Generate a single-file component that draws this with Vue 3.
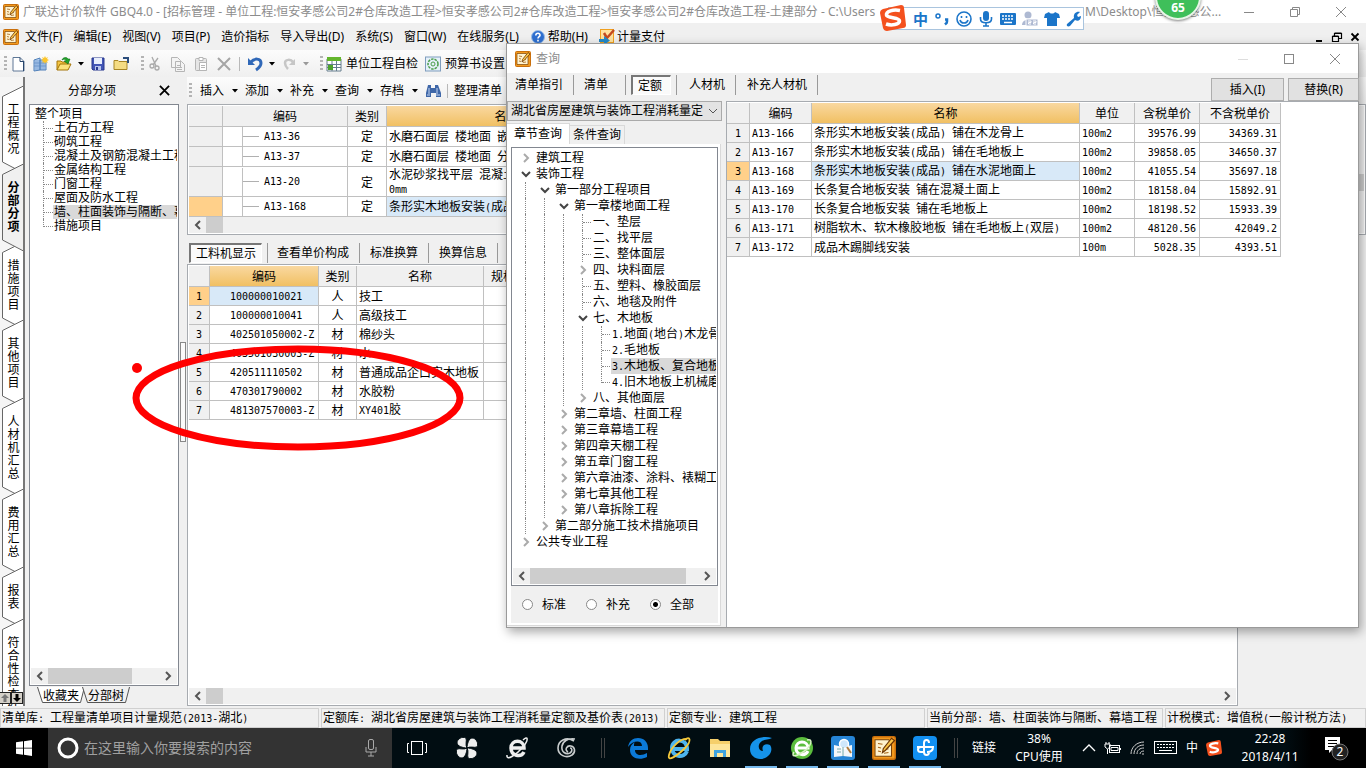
<script setup>
import { h, ref } from 'vue'

/* Splits a label so that its Latin runs use the half-width face. */
const Mix = (props) =>
  props.t.split(/([\x20-\x7e]+)/).filter(Boolean).map((s) =>
    /^[\x20-\x7e]/.test(s) ? h('span', { class: 'half' }, s) : s
  )
Mix.props = ['t']

const menusA = ['文件(F)', '编辑(E)', '视图(V)', '项目(P)', '造价指标', '导入导出(D)', '系统(S)', '窗口(W)', '在线服务(L)']
const sideTabs = ['工程概况', '分部分项', '措施项目', '其他项目', '人材机汇总', '费用汇总', '报表', '符合性检查结果']
const parts = ['土石方工程', '砌筑工程', '混凝土及钢筋混凝土工程', '金属结构工程', '门窗工程', '屋面及防水工程', '墙、柱面装饰与隔断、幕墙工程', '措施项目']
const actions = ['插入', '添加', '补充', '查询', '存档']
const quota = [
  { code: 'A13-36', name: '水磨石面层 楼地面 嵌条' },
  { code: 'A13-37', name: '水磨石面层 楼地面 分格' },
  { code: 'A13-20', name: '水泥砂浆找平层 混凝土', more: '0mm' },
  { code: 'A13-168', name: '条形实木地板安装(成品) 铺在' }
]
const detailTabs = ['查看单价构成', '标准换算', '换算信息']
const resources = [
  ['100000010021', '人', '技工'],
  ['100000010041', '人', '高级技工'],
  ['402501050002-Z', '材', '棉纱头'],
  ['403501030003-Z', '材', '水'],
  ['420511110502', '材', '普通成品企口实木地板'],
  ['470301790002', '材', '水胶粉'],
  ['481307570003-Z', '材', 'XY401胶']
]
const results = [
  ['A13-166', '条形实木地板安装(成品) 铺在木龙骨上', '100m2', '39576.99', '34369.31'],
  ['A13-167', '条形实木地板安装(成品) 铺在毛地板上', '100m2', '39858.05', '34650.37'],
  ['A13-168', '条形实木地板安装(成品) 铺在水泥地面上', '100m2', '41055.54', '35697.18'],
  ['A13-169', '长条复合地板安装 铺在混凝土面上', '100m2', '18158.04', '15892.91'],
  ['A13-170', '长条复合地板安装 铺在毛地板上', '100m2', '18198.52', '15933.39'],
  ['A13-171', '树脂软木、软木橡胶地板 铺在毛地板上(双层)', '100m2', '48120.56', '42049.2'],
  ['A13-172', '成品木踢脚线安装', '100m', '5028.35', '4393.51']
]
/* level, state (c closed, o open, l leaf, e last leaf), label */
const chapters = [
  [0, 'c', '建筑工程'],
  [0, 'o', '装饰工程'],
  [1, 'o', '第一部分工程项目'],
  [2, 'o', '第一章楼地面工程'],
  [3, 'l', '一、垫层'],
  [3, 'l', '二、找平层'],
  [3, 'l', '三、整体面层'],
  [3, 'c', '四、块料面层'],
  [3, 'l', '五、塑料、橡胶面层'],
  [3, 'l', '六、地毯及附件'],
  [3, 'o', '七、木地板'],
  [4, 'l', '1.地面(地台)木龙骨'],
  [4, 'l', '2.毛地板'],
  [4, 'l', '3.木地板、复合地板'],
  [4, 'e', '4.旧木地板上机械磨光'],
  [3, 'c', '八、其他面层'],
  [2, 'c', '第二章墙、柱面工程'],
  [2, 'c', '第三章幕墙工程'],
  [2, 'c', '第四章天棚工程'],
  [2, 'c', '第五章门窗工程'],
  [2, 'c', '第六章油漆、涂料、裱糊工程'],
  [2, 'c', '第七章其他工程'],
  [2, 'c', '第八章拆除工程'],
  [1, 'c', '第二部分施工技术措施项目'],
  [0, 'c', '公共专业工程']
]
const scope = ref('全部')
</script>

<template>
  <div class="screen">
    <svg class="defs" aria-hidden="true">
      <symbol id="book" viewBox="0 0 16 16">
        <rect x=".5" y=".5" width="15" height="15" rx="1" fill="#f39a1d" stroke="#c96f0c" />
        <path d="M2 2.500h9l2 2v9H2z" fill="#fff3cf" stroke="#7a4308" stroke-width=".7" />
        <path d="M4 5l3 .5M4 7.500l2 .5M4 10l2 .5M9 9l2-.5M8 11.500l3-.5" stroke="#a5641a" stroke-width=".8" />
        <path d="M13 1.500L7.500 8.500l-.5 2.500 2-1.500L15 3z" fill="#fbc64a" stroke="#6b3505" stroke-width=".8" />
      </symbol>
      <symbol id="down" viewBox="0 0 6 4"><path d="M0 0h6L3 3.500z" fill="currentColor" /></symbol>
      <symbol id="prev" viewBox="0 0 8 10"><path d="M6 1L2 5l4 4" fill="none" stroke="currentColor" stroke-width="2" /></symbol>
      <symbol id="next" viewBox="0 0 8 10"><path d="M2 1l4 4-4 4" fill="none" stroke="currentColor" stroke-width="2" /></symbol>
      <symbol id="min" viewBox="0 0 10 10"><path d="M0 5.500h10" stroke="currentColor" /></symbol>
      <symbol id="max" viewBox="0 0 10 10"><rect x=".5" y=".5" width="9" height="9" fill="none" stroke="currentColor" /></symbol>
      <symbol id="restore" viewBox="0 0 10 10"><path d="M.5 2.500h7v7h-7zM2.500 2.500v-2h7v7h-2" fill="none" stroke="currentColor" /></symbol>
      <symbol id="close" viewBox="0 0 10 10"><path d="M0 0l10 10M10 0L0 10" stroke="currentColor" /></symbol>
      <symbol id="sogou" viewBox="0 0 26 28">
        <path d="M3 5l18-4q3 0 3 3l2 17q0 3-3 3L7 27q-3 0-4-3L0 9q0-3 3-4z" fill="#f4511e" />
        <path d="M20 6.500C13 5 6 7.500 6.500 11c.5 3.500 13 2 13 6 0 3.500-8 5-13.500 3" fill="none" stroke="#fff" stroke-width="3.600" />
      </symbol>
    </svg>

    <header class="titlebar">
      <svg class="i16"><use href="#book" /></svg>
      <span class="title">广联达计价软件 GBQ4.0 - [招标管理 - 单位工程:恒安孝感公司2#仓库改造工程&gt;恒安孝感公司2#仓库改造工程&gt;恒安孝感公司2#仓库改造工程-土建部分 - C:\Users</span>
      <span class="path">M\Desktop\恒安孝感公...</span>
      <div class="winbtns">
        <button aria-label="最小化"><svg class="i10"><use href="#min" /></svg></button>
        <button aria-label="还原"><svg class="i10"><use href="#restore" /></svg></button>
        <button aria-label="关闭"><svg class="i10"><use href="#close" /></svg></button>
      </div>
    </header>

    <nav class="menubar">
      <svg class="i16"><use href="#book" /></svg>
      <button v-for="m in menusA" :key="m">{{ m }}</button>
      <button class="withicon">
        <svg class="i16" viewBox="0 0 16 16"><circle cx="8" cy="8" r="6.500" fill="#2e6fd0" stroke="#9dbfe8" /><path d="M5.800 6.500C5.800 3.500 10.300 3.700 10 6.300 9.800 7.700 8 7.700 8 9.500M8 10.800v1.600" fill="none" stroke="#fff" stroke-width="1.600" /></svg>帮助(H)
      </button>
      <button class="withicon">
        <svg class="i16" viewBox="0 0 16 16"><rect x="1.500" y=".5" width="13" height="13" fill="#ffe2a0" stroke="#f0a020" /><path d="M5 4l3 5 7-8" fill="none" stroke="#c44a20" stroke-width="2.500" /><path d="M0 10h5V7l6 4.500-6 4.500v-3H0z" fill="#258ac8" /></svg>计量支付
      </button>
      <div class="mdi">
        <button aria-label="最小化文档"><svg class="i10" viewBox="0 0 10 10"><path d="M2 9h6" stroke="#000" stroke-width="2" /></svg></button>
        <button aria-label="还原文档"><svg class="i10" viewBox="0 0 10 10"><path d="M.5 4.500h6v5h-6zM2.500 4V1.500h7v5H7M2.500 1h7M.5 4h6" fill="none" stroke="#000" stroke-width="1.200" /></svg></button>
        <button aria-label="关闭文档"><svg class="i10" viewBox="0 0 10 10"><path d="M1.500 1.500l7 7M8.500 1.500l-7 7" stroke="#000" stroke-width="1.800" /></svg></button>
      </div>
    </nav>

    <div class="toolbar main">
      <i class="grip"></i>
      <button aria-label="新建"><svg class="i16" viewBox="0 0 16 16"><path d="M3 1.500h7l4 4v9.500H3z" fill="#fff" stroke="#5e7796" /><path d="M10 1.500v4h4M13.500 5v10" fill="none" stroke="#28466c" /></svg></button>
      <button aria-label="新建项目"><svg class="i16" viewBox="0 0 16 16"><path d="M1 4l6-2v12l-6 1zM7 4h6v10H7z" fill="#b9d3f2" stroke="#4f7fb8" /><path d="M3 4v10M5 4v10M9 5v9M11 5v9M1 7h12M1 10h12" stroke="#5c8bc4" stroke-width=".7" /><path d="M12 0l1 2 2-1-1 2 2 1-2 1 1 2-2-1-1 2-1-2-2 1 1-2-2-1 2-1-1-2 2 1z" fill="#fbc52c" /></svg></button>
      <button aria-label="打开"><svg class="i16" viewBox="0 0 16 16"><path d="M1 14V5h4l1 1h6v3" fill="#f4c543" stroke="#a3740a" /><path d="M1 14l3-6h11l-3 6z" fill="#fbe27c" stroke="#a3740a" /><path d="M6 4c1-3 5-3 6-1h2l-2 5-4-3h2C10 3 7 3 6 4z" fill="#22a52b" stroke="#0d6e15" stroke-width=".6" /></svg></button>
      <svg class="arrow"><use href="#down" /></svg>
      <button aria-label="保存"><svg class="i16" viewBox="0 0 16 16"><path d="M2 2h12v12H3l-1-1z" fill="#4255b5" stroke="#26368d" /><path d="M4 2h8v6H4z" fill="#e8eefc" /><path d="M5 10h6v4H5z" fill="#b7c3ec" /><path d="M6 11h2v3H6z" fill="#26368d" /></svg></button>
      <button aria-label="另存"><svg class="i16" viewBox="0 0 16 16"><path d="M1 13.500v-9h4l1 1h8v8z" fill="#f5dc83" stroke="#a88525" /><path d="M10 2h5v5" fill="none" stroke="#2b4d7c" stroke-width="2" /></svg></button>
      <i class="grip"></i>
      <button aria-label="剪切"><svg class="i16" viewBox="0 0 16 16" fill="none" stroke="#aaa" stroke-width="1.300"><path d="M5 1l4 9M11 2L6 9" /><circle cx="5" cy="10" r="2" /><circle cx="10" cy="12" r="2" /></svg></button>
      <button aria-label="复制"><svg class="i16" viewBox="0 0 16 16" fill="#f4f4f4" stroke="#b5b5b5"><path d="M1.500 1.500h6l3 3v7h-9zM5.500 5.500h6l3 3v7h-9z" /><path d="M7 9.500h4M7 11.500h5M7 13.500h5" /></svg></button>
      <button aria-label="粘贴"><svg class="i16" viewBox="0 0 16 16" fill="#e6e6e6" stroke="#b5b5b5"><rect x="2.500" y="2.500" width="11" height="12" rx="1" /><path d="M6 1.500h4v3H6zM6.500 6.500h7v8h-7z" fill="#fff" /><path d="M8 9.500h4M8 11.500h4" /></svg></button>
      <button aria-label="删除"><svg class="i16" viewBox="0 0 16 16"><path d="M2 2l12 12M14 2L2 14" stroke="#a5a5a5" stroke-width="2" /></svg></button>
      <i class="bar"></i>
      <button aria-label="撤销"><svg class="i16" viewBox="0 0 16 16"><path d="M4 6c3-4 10-4 10 1 0 3-2 5-5 7" fill="none" stroke="#3068b8" stroke-width="3" /><path d="M1 2v7h7z" fill="#3068b8" /></svg></button>
      <svg class="arrow"><use href="#down" /></svg>
      <button aria-label="重做"><svg class="i16" viewBox="0 0 16 16"><path d="M12 6C10 3 4 3 4 7c0 3 1 4 3 6" fill="none" stroke="#c6c6c6" stroke-width="2.500" /><path d="M14 3v6H8z" fill="#c6c6c6" /></svg></button>
      <svg class="arrow dim"><use href="#down" /></svg>
      <i class="grip"></i>
      <button class="withicon"><svg class="i16" viewBox="0 0 16 16"><path d="M1 3h14v12H1z" fill="#fff" stroke="#647c8c" /><path d="M1 1h14v4H1z" fill="#63b52c" /><path d="M1 8.500h14M1 11.500h14M6 5v10M10.500 5v10" stroke="#647c8c" /><path d="M2 9h5v5H2z" fill="#4da32c" /></svg>单位工程自检</button>
      <button class="withicon"><svg class="i16" viewBox="0 0 16 16"><rect x=".5" y="1" width="15" height="14" fill="#e6f0fa" stroke="#7f9dbd" /><circle cx="8" cy="8" r="5" fill="none" stroke="#4a9e4a" stroke-width="1.500" stroke-dasharray="2.500 1" /><circle cx="8" cy="8" r="2" fill="none" stroke="#4a9e4a" /></svg>预算书设置</button>
    </div>

    <main class="work">
      <aside class="rail">
        <button v-for="(s, k) in sideTabs" :key="s" class="vtab" :class="{ on: k === 1 }">
          <svg class="vshape" :height="s.length * 13 + 26"><path :d="`M21.500 -10L.5 .5V${s.length * 13 + 14}L21.500 ${s.length * 13 + 25}`" /></svg>
          <span>{{ s }}</span>
        </button>
        <div class="railnav">
          <button aria-label="上移"><svg class="i10" viewBox="0 0 10 10"><path d="M5 1l4 4H6.500v4h-3V5H1z" fill="#777" /></svg></button>
          <button aria-label="下移"><svg class="i10" viewBox="0 0 10 10"><path d="M5 9l4-4H6.500V1h-3v4H1z" fill="#000" /></svg></button>
        </div>
      </aside>

      <section class="panel">
        <div class="panelhead"><span>分部分项</span><button aria-label="关闭面板"><svg viewBox="0 0 12 12"><path d="M1 1l10 10M11 1L1 11" stroke="#000" stroke-width="2" /></svg></button></div>
        <div class="treebox">
          <ul class="parttree">
            <li class="root">整个项目</li>
            <li v-for="(p, k) in parts" :key="p" :class="{ on: k === 6, last: k === 7 }"><i></i><span>{{ p }}</span></li>
          </ul>
          <div class="hscroll"><svg><use href="#prev" /></svg><b class="t1"></b><svg class="end"><use href="#next" /></svg></div>
        </div>
        <div class="foottabs">
          <button><svg width="48" height="16" viewBox="0 0 48 16"><path d="M.5 0l5 15.500h38L47.500 0" fill="#fff" stroke="#555" /></svg><span>收藏夹</span></button>
          <button><svg width="48" height="16" viewBox="0 0 48 16"><path d="M.5 0l5 15.500h38L47.500 0" fill="#f0f0f0" stroke="#555" /></svg><span>分部树</span></button>
        </div>
      </section>

      <div class="splitter"><i></i></div>

      <section class="center">
        <div class="toolbar sub">
          <i class="grip"></i>
          <template v-for="a in actions" :key="a"><button>{{ a }}</button><svg class="arrow"><use href="#down" /></svg></template>
          <button aria-label="查找"><svg class="i16" viewBox="0 0 16 16"><path d="M3 2h3v3h4V2h3l3 8v4h-5v-4H6v4H1v-4z" fill="#3f67a8" /><path d="M4 5v6M12 5v6M2 12h3M11 12h4" stroke="#c7d8f2" /></svg></button>
          <i class="bar"></i>
          <button>整理清单</button>
        </div>

        <div class="gridbox upper">
          <div class="gridclip">
            <table class="grid quota">
              <colgroup><col class="w34" /><col class="w125" /><col class="w39" /><col class="w240" /></colgroup>
              <thead><tr><th></th><th>编码</th><th>类别</th><th class="hot">名称</th></tr></thead>
              <tbody>
                <tr v-for="(q, k) in quota" :key="q.code" :class="{ tall: q.more }">
                  <th :class="{ cur: k === 3 }"></th>
                  <td class="branch"><div><i></i><u></u><Mix :t="q.code" /></div></td>
                  <td class="mid">定</td>
                  <td :class="{ sel: k === 3 }"><Mix :t="q.name" /><template v-if="q.more"><br /><Mix :t="q.more" /></template></td>
                </tr>
              </tbody>
            </table>
          </div>
          <div class="vscroll"><b></b></div>
          <div class="hscroll"><svg><use href="#prev" /></svg><b class="t2"></b></div>
        </div>

        <div class="tabs">
          <button class="down">工料机显示</button>
          <button v-for="d in detailTabs" :key="d">{{ d }}</button>
        </div>

        <div class="gridbox lower">
          <div class="gridclip">
            <table class="grid">
              <colgroup><col class="w21" /><col class="w109" /><col class="w38" /><col class="w127" /><col class="w39" /></colgroup>
              <thead><tr><th></th><th class="hot">编码</th><th>类别</th><th>名称</th><th>规格</th></tr></thead>
              <tbody>
                <tr v-for="(r, k) in resources" :key="r[0]">
                  <th :class="{ cur: k === 0 }"><Mix :t="String(k + 1)" /></th>
                  <td class="code" :class="{ sel: k === 0 }"><Mix :t="r[0]" /></td>
                  <td class="mid">{{ r[1] }}</td>
                  <td><Mix :t="r[2]" /></td>
                  <td></td>
                </tr>
              </tbody>
            </table>
          </div>
          <div class="hscroll"><svg><use href="#prev" /></svg><b class="t2"></b><svg class="end"><use href="#next" /></svg></div>
        </div>
      </section>
    </main>

    <footer class="status">
      <span class="s1"><Mix t="清单库: 工程量清单项目计量规范(2013-湖北)" /></span>
      <span class="s2"><Mix t="定额库: 湖北省房屋建筑与装饰工程消耗量定额及基价表(2013)" /></span>
      <span class="s3"><Mix t="定额专业: 建筑工程" /></span>
      <span class="s4"><Mix t="当前分部: 墙、柱面装饰与隔断、幕墙工程" /></span>
      <span class="s5"><Mix t="计税模式: 增值税(一般计税方法)" /></span>
    </footer>

    <div class="taskbar">
      <button class="start" aria-label="开始"><svg class="i16" viewBox="0 0 16 16"><path d="M0 2.300l7-1v6.400H0zM8 1.200L16 0v7.700H8zM0 8.500h7v6.300l-7-1zM8 8.500h8V16l-8-1.200z" fill="#fff" /></svg></button>
      <label class="search">
        <svg width="22" height="22" viewBox="0 0 22 22"><circle cx="11" cy="11" r="9" fill="none" stroke="#fff" stroke-width="3" /></svg>
        <input type="text" placeholder="在这里输入你要搜索的内容" aria-label="搜索" />
        <svg width="12" height="18" viewBox="0 0 12 18" fill="none" stroke="#aaa"><rect x="3.500" y=".5" width="5" height="10" rx="1.500" /><path d="M1 8v5h10V8M6 13v4M3 17h6" /></svg>
      </label>
      <div class="apps quick">
        <button aria-label="任务视图"><svg width="22" height="16" viewBox="0 0 22 16" fill="none" stroke="#fff"><rect x="5.500" y="1.500" width="11" height="13" /><path d="M3 3.500H1.500v9H3M19 3.500h1.500v9H19" /></svg></button>
        <button aria-label="花瓣"><svg class="i22" viewBox="0 0 22 22" fill="#eee"><path d="M11 11C9 8 11 4 10 1 6-1 1 2 1 6c0 3 6 5 10 5zM11 11c3-2 7 0 10-1 2-4-1-9-5-9-3 0-5 6-5 10zM11 11c2 3 0 7 1 10 4 2 9-1 9-5 0-3-6-5-10-5zM11 11c-3 2-7 0-10 1-2 4 1 9 5 9 3 0 5-6 5-10z" stroke="#010d12" /></svg></button>
        <button aria-label="浏览器"><svg class="i22" viewBox="0 0 22 22" fill="none" stroke="#eee"><path d="M18 15c-3 6-13 4-13-4 0-9 13-9 13 0H6" stroke-width="3.500" /><path d="M17 3c5-5 6 0 0 7C11 17 0 25 1 18" stroke-width="1.500" /></svg></button>
        <button aria-label="游戏"><svg class="i22" viewBox="0 0 22 22" fill="none" stroke="#c8cccd" stroke-width="1.600"><path d="M18 4C10-1 2 4 2 11s8 11 14 7c4-3 3-8-1-9-4-1-7 4-3 6M19 2C12 1 7 4 6 9c-1 6 4 9 8 7 3-2 2-5 0-5" /></svg></button>
      </div>
      <i class="divide"></i>
      <div class="apps">
        <button aria-label="Edge"><svg class="i24" viewBox="0 0 24 24"><path d="M2 11C3 5 7 2 12 2c6 0 10 4 10 10v2H9c0 6 7 6 12 3v4c-8 4-17 1-17-7 0-4 2-6 5-8-1 1-1 2-1 4h8c0-6-9-6-14 1z" fill="#0b79d7" /></svg></button>
        <button aria-label="Internet Explorer"><svg class="i24" viewBox="0 0 24 24" fill="none"><path d="M20 15c-3 8-15 6-15-3 0-10 15-10 15 1H6" stroke="#4db4ee" stroke-width="4" /><path d="M18 4c5-5 7 1 0 8S0 27 2 19 14 2 20 3" stroke="#f5c93b" stroke-width="1.800" /></svg></button>
        <button aria-label="文件夹"><svg class="i24" viewBox="0 0 24 24"><path d="M2 3h8l2 2h10v16H2z" fill="#f5cf6b" /><path d="M2 8h20v13H2z" fill="#fde59a" /><path d="M6 21v-7h12v7h-3v-4H9v4z" fill="#3ea2df" /></svg></button>
        <button class="run" aria-label="广联达"><svg class="i24" viewBox="0 0 24 24"><path d="M23 2C14-1 1 3 1 13c0 8 8 12 15 9 6-3 8-9 5-13-5-2-9 1-7 6-5 0-6-7-1-10 3-2 7-1 10-3z" fill="#1593ea" /></svg></button>
        <button class="run" aria-label="安全浏览器"><svg class="i24" viewBox="0 0 24 24"><circle cx="12" cy="12" r="11" fill="#5bbd3d" /><path d="M18 15c-3 6-12 4-12-3 0-8 12-8 12 0H7" fill="none" stroke="#fff" stroke-width="3" /><path d="M17 4c7-2 4 7-4 12S1 21 4 16" fill="none" stroke="#d9f3c5" stroke-width="1.500" /></svg></button>
        <button class="run" aria-label="阅读"><svg class="i24" viewBox="0 0 24 24"><rect width="24" height="24" rx="3" fill="#2685d6" /><path d="M3 9l9 2 9-2v12l-9-1-9 1z" fill="#f3f7fb" /><circle cx="13" cy="8" r="4.500" fill="#cfe7fb" stroke="#fff" stroke-width="1.500" /><path d="M16 11l4 6" stroke="#af7b3e" stroke-width="2" /><path d="M6 13h4M6 16h4M12 11v9" stroke="#7aa" /></svg></button>
        <button class="run" aria-label="GBQ4.0"><svg class="i24"><use href="#book" /></svg></button>
        <button class="run" aria-label="同步"><svg class="i24" viewBox="0 0 24 24"><rect width="24" height="24" rx="4" fill="#128ff0" /><path d="M16 7c0-4-5-4-5 0v9c0 4 5 4 5 0M4 11h16c0 4-2 5-6 5M11 11H8c-4 0-4 5 0 5h3" fill="none" stroke="#fff" stroke-width="2" /></svg></button>
      </div>
      <i class="divide"></i>
      <span class="link">链接</span>
      <span class="stack cpu"><span>38%</span><span>CPU使用</span></span>
      <div class="tray">
        <svg width="14" height="10" viewBox="0 0 14 10"><path d="M1 8l6-6 6 6" fill="none" stroke="#fff" stroke-width="1.300" /></svg>
        <svg width="18" height="14" viewBox="0 0 18 14" fill="none" stroke="#fff"><rect x="5.500" y="4.500" width="10" height="7" /><path d="M7 6.500h7v3H7zM16.500 7v2M1 3h5v3L3.500 8 1 6zM2 1v2M5 1v2M3.500 8v5" /></svg>
        <svg width="16" height="16" viewBox="0 0 16 16" fill="none" stroke="#ccc"><path d="M1 14C1 7 7 2 14 2M4 14c0-5 4-9 10-9M7 14c0-4 3-6 7-6M10 14c0-2 2-3 4-3M12 14h2" /></svg>
        <svg width="24" height="14" viewBox="0 0 24 14" fill="none" stroke="#fff"><rect x=".5" y=".5" width="22" height="12" /><path d="M3 3.500h17M3 6.500h17" stroke-dasharray="2 1" /><path d="M5 9.500h13" /></svg>
        <span>中</span>
        <svg width="16" height="18"><use href="#sogou" /></svg>
      </div>
      <span class="stack clock"><span>22:28</span><span>2018/4/11</span></span>
      <button class="notice" aria-label="通知"><svg width="28" height="28" viewBox="0 0 28 28"><path d="M2 3h15v13H9l-3 3v-3H2z" fill="#fff" /><path d="M5 6.500h9M5 9.500h9M5 12.500h6" stroke="#000" /><circle cx="17" cy="18" r="8" fill="#222" stroke="#777" /><text x="17" y="22" text-anchor="middle" fill="#fff" font-size="12">2</text></svg></button>
    </div>

    <section class="dialog" role="dialog" aria-label="查询">
      <div class="dlgtitle">
        <svg class="i16"><use href="#book" /></svg><span>查询</span>
        <div class="winbtns">
          <button class="faint" aria-label="最小化查询"><svg class="i10"><use href="#min" /></svg></button>
          <button aria-label="最大化查询"><svg class="i10"><use href="#max" /></svg></button>
          <button aria-label="关闭查询"><svg class="i10"><use href="#close" /></svg></button>
        </div>
      </div>
      <div class="dlgbar">
        <div class="tabs">
          <button>清单指引</button><button>清单</button><button class="down">定额</button><button>人材机</button><button>补充人材机</button>
        </div>
        <div class="cmds"><button>插入(I)</button><button>替换(R)</button></div>
      </div>
      <div class="dlgbody">
        <div class="browse">
          <div class="combo">
            <select aria-label="定额库"><option>湖北省房屋建筑与装饰工程消耗量定</option></select>
            <svg width="10" height="6" viewBox="0 0 10 6"><path d="M1 1l4 4 4-4" fill="none" stroke="#555" /></svg>
          </div>
          <div class="pagetabs"><button class="on">章节查询</button><button>条件查询</button></div>
          <div class="page">
            <div class="treebox">
              <ul class="chaps">
                <li v-for="([lv, st, tx], k) in chapters" :key="tx" :class="{ on: k === 13 }">
                  <i v-for="n in lv" :key="n" class="line"></i>
                  <i class="node" :class="{ line: st === 'l' || st === 'e', half: st === 'e', dash: st === 'l' || st === 'e' }">
                    <svg v-if="st === 'c'" width="8" height="10" class="closed"><use href="#next" /></svg>
                    <svg v-if="st === 'o'" width="10" height="8" viewBox="0 0 10 8"><path d="M1 2l4 4 4-4" fill="none" stroke="#444" stroke-width="2" /></svg>
                  </i>
                  <span><Mix :t="tx" /></span>
                </li>
              </ul>
              <div class="hscroll"><svg><use href="#prev" /></svg><b class="t3"></b><svg class="end"><use href="#next" /></svg></div>
            </div>
            <div class="radios">
              <label v-for="o in ['标准', '补充', '全部']" :key="o"><input v-model="scope" type="radio" name="scope" :value="o" />{{ o }}</label>
            </div>
          </div>
        </div>
        <div class="resultbox">
          <table class="grid results">
            <colgroup><col class="w23" /><col class="w62" /><col class="w268" /><col class="w55" /><col class="w65" /><col class="w81" /></colgroup>
            <thead><tr><th></th><th>编码</th><th class="hot">名称</th><th>单位</th><th>含税单价</th><th>不含税单价</th></tr></thead>
            <tbody>
              <tr v-for="(r, k) in results" :key="r[0]">
                <th :class="{ cur: k === 2 }"><Mix :t="String(k + 1)" /></th>
                <td><Mix :t="r[0]" /></td>
                <td :class="{ sel: k === 2 }"><Mix :t="r[1]" /></td>
                <td><Mix :t="r[2]" /></td>
                <td class="num"><Mix :t="r[3]" /></td>
                <td class="num"><Mix :t="r[4]" /></td>
              </tr>
            </tbody>
          </table>
        </div>
      </div>
    </section>

    <div class="ime">
      <svg class="imelogo"><use href="#sogou" /></svg>
      <span>中</span>
      <svg class="i16" viewBox="0 0 16 16" fill="none" stroke="#1b75c9" stroke-width="1.500"><circle cx="4" cy="5" r="2" /><path d="M11 8.500h2v2c0 2-1 2-2 3" stroke-width="2.500" /></svg>
      <svg class="i16" viewBox="0 0 16 16" fill="none" stroke="#1b75c9" stroke-width="1.600"><circle cx="8" cy="8" r="7" /><path d="M5.500 5v2M10.500 5v2M4 9c1 4 7 4 8 0" /></svg>
      <svg class="i16" viewBox="0 0 16 16"><rect x="5" y="0" width="6" height="10" rx="3" fill="#1b75c9" /><path d="M2.500 6v2c0 5 11 5 11 0V6M8 12v3M5 15h6" fill="none" stroke="#1b75c9" stroke-width="1.600" /></svg>
      <svg class="i16" viewBox="0 0 16 16"><rect y="2" width="16" height="12" rx="1" fill="#1b75c9" /><path d="M2 5h12M2 8h12" stroke="#fff" stroke-width="1.600" stroke-dasharray="2 1" /><path d="M4 11.500h8" stroke="#fff" stroke-width="1.500" /></svg>
      <svg class="i16" viewBox="0 0 16 16"><circle cx="6" cy="4" r="3.500" fill="#aeb9d2" /><path d="M0 14c0-7 12-7 12 0z" fill="#aeb9d2" /><path d="M4 8h12v7H4z" fill="#aeb9d2" stroke="#fff" /><path d="M6 10h3v1.500H6.500V13H9M11 10h3v1.500h-2.500V13H14" fill="none" stroke="#fff" /></svg>
      <svg class="i16" viewBox="0 0 16 16"><path d="M5 1c1 2 5 2 6 0l4 2 1 4h-3v8H3V7H0l1-4z" fill="#1b75c9" /></svg>
      <svg class="i16" viewBox="0 0 16 16"><path d="M1 13L8 7C7 2 11 0 14 1l-3 3 1 2 3-1c0 4-3 6-6 4l-5 6c-2 1-4 0-3-2z" fill="#1b75c9" /></svg>
    </div>
    <div class="ball">65</div>

    <svg class="mark" viewBox="0 0 340 112" aria-hidden="true">
      <ellipse cx="170" cy="58" rx="162" ry="49" fill="none" stroke="#f00" stroke-width="7" />
      <circle cx="9" cy="28" r="5" fill="#f00" />
    </svg>
  </div>
</template>

<style>
html, body { margin: 0; height: 100%; overflow: hidden; }
.half { font-family: "DejaVu Sans Mono", monospace; font-size: 10px; white-space: pre; }
</style>

<style scoped>
.screen { position: relative; height: 100vh; display: flex; flex-direction: column; overflow: hidden; background: #f0f0f0; color: #000; font: 12px/16px "Noto Sans", "Noto Sans CJK SC", sans-serif; }
.screen *, .screen *::before { box-sizing: border-box; }
.defs { position: absolute; width: 0; height: 0; }
button { font: inherit; color: inherit; background: none; border: 0; padding: 0; margin: 0; white-space: nowrap; }
ul { list-style: none; margin: 0; padding: 0; }
svg { display: block; flex: none; overflow: visible; }
.i10 { width: 10px; height: 10px; }
.i16 { width: 16px; height: 16px; }
.i22 { width: 22px; height: 22px; }
.i24 { width: 24px; height: 24px; }

.titlebar { flex: none; height: 23px; display: flex; align-items: center; padding-left: 3px; background: #fff; color: #8c8c8c; white-space: nowrap; }
.title { flex: 0 0 1066px; padding-left: 4px; overflow: hidden; }
.winbtns { margin-left: auto; display: flex; }
.winbtns button { width: 46px; display: flex; justify-content: center; color: #888; }
.titlebar .winbtns { margin-right: 2px; }
.winbtns .faint { color: #ddd; }

.menubar { flex: none; height: 27px; display: flex; align-items: center; gap: 11px; padding-left: 3px; }
.menubar > .i16 { margin-right: -5px; }
.withicon { display: flex; align-items: center; gap: 4px; }
.menubar .withicon { gap: 2px; }
.mdi { margin-left: auto; display: flex; gap: 8px; padding-right: 6px; }

.toolbar { flex: none; height: 27px; display: flex; align-items: center; gap: 7px; padding-left: 4px; background: linear-gradient(#fcfcfc, #efefef); }
.grip { width: 3px; height: 15px; background: repeating-linear-gradient(#b4b4b4 0 2px, transparent 2px 4px); }
.arrow { width: 6px; height: 4px; }
.main .arrow { margin: 0 -1px; }
.main .grip { margin: 0 -4px 0 5px; }
.main .grip:first-child { margin-left: 0; }
.dim { color: #999; }
.bar { width: 1px; height: 14px; background: #b8b8b8; }
.sub { gap: 8px; padding-left: 2px; }
.sub .bar { margin: 0 -2px; }
.sub .arrow { margin: 0 -1px 0 0; }

.work { flex: 1; min-height: 0; display: grid; grid-template-columns: 25px 154px 8px 1fr; }
.rail { position: relative; overflow: hidden; padding: 19px 0 0 2px; background: #f5f5f5; border-right: 2px solid #777; }
.vtab { position: relative; display: block; width: 22px; padding: 7px 5px 19px; }
.vtab span { position: relative; display: block; width: 13px; line-height: 13px; white-space: normal; word-break: break-all; }
.vshape { position: absolute; left: 0; top: 0; width: 22px; }
.vshape path { fill: #fff; stroke: #666; }
.on .vshape path { fill: #f0f0f0; }
.vtab.on { font-weight: bold; z-index: 1; }
.railnav { position: absolute; left: -1px; bottom: 2px; z-index: 2; display: flex; }
.railnav button { width: 12px; height: 12px; display: grid; place-items: center; background: #d4d0c8; border: 1px solid #222; }

.panel { min-width: 0; display: flex; flex-direction: column; padding: 0 0 3px 4px; }
.panelhead { height: 27px; display: flex; align-items: center; justify-content: space-between; padding: 0 9px 0 39px; }
.panelhead svg { width: 11px; height: 11px; }
.treebox { flex: 1; min-height: 0; display: flex; flex-direction: column; background: #fff; border: 1px solid #828790; padding: 1px; overflow: hidden; }
.parttree { flex: 1; padding: 1px 0 0 4px; }
.parttree li { height: 14px; line-height: 14px; display: flex; white-space: nowrap; }
.parttree i { position: relative; flex: none; width: 15px; margin-left: 8px; border-left: 1px dotted #888; }
.parttree i::before { content: ""; position: absolute; left: 0; top: 7px; width: 9px; border-top: 1px dotted #888; }
.parttree .last i { height: 8px; }
.parttree span { margin-left: -5px; padding-left: 1px; flex: 1; overflow: hidden; }
.parttree .on span { background: #d9d9d9; }
.hscroll { flex: none; height: 16px; display: flex; align-items: center; background: #f0f0f0; color: #555; }
.hscroll svg { width: 8px; height: 10px; margin: 0 4px 0 5px; }
.hscroll .end { margin-left: auto; margin-right: 5px; }
.hscroll b { height: 16px; background: #cdcdcd; }
.t1 { width: 84px; }
.t2 { width: 17px; }
.t3 { width: 156px; }
.foottabs { flex: none; display: flex; padding: 1px 0 0 8px; height: 17px; }
.foottabs button { position: relative; width: 45px; height: 16px; }
.foottabs svg { position: absolute; left: 0; top: 0; }
.foottabs span { position: relative; display: block; padding-left: 3px; line-height: 15px; }
.splitter { display: flex; align-items: center; padding: 0 1px; }
.splitter i { width: 6px; height: 100px; border: 1px solid #888; background: #fafafa; }

.center { min-width: 0; display: flex; flex-direction: column; }
.gridbox { position: relative; display: flex; flex-direction: column; background: #fff; border: 1px solid #a7abb0; padding: 1px; }
.upper { flex: 0 0 131px; padding-right: 20px; }
.lower { flex: 1; min-height: 0; margin-right: 128px; }
.gridclip { flex: 1; min-height: 0; overflow: hidden; }
.vscroll { position: absolute; right: 1px; top: 1px; bottom: 1px; width: 17px; background: #f0f0f0; }
.vscroll b { display: block; width: 17px; height: 17px; margin-top: 68px; background: #cdcdcd; }
.grid { table-layout: fixed; width: 0; border-collapse: separate; border-spacing: 0; line-height: 16px; }
.grid th, .grid td { height: 19px; padding: 1px 0 0 2px; border: solid #c0c0c0; border-width: 0 1px 1px 0; font-weight: normal; text-align: left; overflow: hidden; white-space: nowrap; }
.grid th { background: #f0f0f0; text-align: center; padding: 1px 0 0; }
.grid thead th { height: 21px; }
.grid .hot { background: linear-gradient(#f9d8a0, #f1c063); }
.grid .cur { background: #ffd08a; }
.grid .sel { background: #d8e9f8; }
.grid .mid { text-align: center; padding: 1px 0 0; }
.grid .num { text-align: right; padding-right: 3px; }
.grid .code { padding-left: 20px; }
.quota tbody th, .quota tbody td { height: 20px; }
.quota .tall th, .quota .tall td { height: 29px; line-height: 13px; }
.grid .branch { padding: 0 0 0 19px; }
.branch div { display: flex; align-items: center; }
.branch i { width: 1px; height: 19px; background: #c0c0c0; }
.tall .branch i { height: 28px; }
.branch u { width: 16px; height: 1px; margin-right: 5px; background: #b0b0b0; }
.w21 { width: 21px; } .w23 { width: 23px; } .w34 { width: 34px; } .w38 { width: 38px; } .w39 { width: 39px; }
.w55 { width: 55px; } .w62 { width: 62px; } .w65 { width: 65px; } .w81 { width: 81px; }
.w109 { width: 109px; } .w125 { width: 125px; } .w127 { width: 127px; } .w240 { width: 240px; } .w268 { width: 268px; }

.tabs { display: flex; align-items: center; height: 20px; }
.tabs button { height: 20px; padding: 0 10px; border-right: 1px solid #999; }
.tabs .down { position: relative; margin: 0 5px; padding: 0 5px; border: solid #777; border-width: 2px 1px 1px 2px; border-right-color: #fff; border-bottom-color: #fff; background: #fafafa; line-height: 17px; }
.tabs .down::after { content: ""; position: absolute; right: -7px; top: -2px; height: 20px; border-left: 1px solid #999; }
.center .tabs { flex: none; margin: 8px 0 1px; }
.center .tabs .down { margin-left: 2px; }

.status { flex: none; height: 22px; display: flex; gap: 2px; padding-top: 2px; white-space: nowrap; background: #f0f0f0; }
.status span { overflow: hidden; }
.status > span { height: 20px; line-height: 18px; padding-left: 1px; border: 1px solid #d0d0d0; }
.s1 { flex: 0 0 319px; } .s2 { flex: 0 0 344px; } .s3 { flex: 1; } .s4 { flex: 0 0 236px; } .s5 { flex: 0 0 201px; }

.taskbar { flex: none; height: 40px; display: flex; align-items: center; background: linear-gradient(90deg, #010d12 94%, #000 96%); color: #fff; }
.start { width: 48px; height: 40px; display: grid; place-items: center; background: #000; }
.search { flex: 0 0 344px; height: 40px; display: flex; align-items: center; gap: 5px; padding: 0 15px 0 9px; background: #333; }
.search input { flex: 1; min-width: 0; font: inherit; font-size: 14px; background: none; border: 0; padding: 0; outline: 0; color: #fff; }
.search input::placeholder { color: #a0a0a0; opacity: 1; }
.apps { display: flex; height: 40px; }
.apps button { width: 41px; display: grid; place-items: center; }
.quick button { width: 50px; }
.apps .run { background: linear-gradient(#76b9ed, #76b9ed) center bottom / 32px 2px no-repeat; }
.divide { width: 4px; height: 20px; margin: 0 8px 0 9px; border: solid #444; border-width: 0 1px; }
.divide + .apps { margin-left: 4px; }
.link { margin-left: 6px; }
.stack { display: flex; flex-direction: column; align-items: center; line-height: 18px; }
.cpu { width: 86px; }
.tray { display: flex; align-items: center; gap: 8px; }
.clock { width: 96px; }
.notice { margin-left: auto; margin-right: 15px; }

.dialog { position: absolute; left: 506px; right: 7px; top: 43px; bottom: 140px; display: flex; flex-direction: column; background: #f0f0f0; border: 1px solid #9a9a9a; box-shadow: 2px 4px 10px rgba(0, 0, 0, .35); }
.dlgtitle { flex: none; height: 29px; display: flex; align-items: center; gap: 5px; padding-left: 8px; background: #fff; color: #8c8c8c; }
.dlgbar { flex: none; height: 28px; display: flex; justify-content: space-between; }
.dialog .tabs { padding: 2px 0; height: 24px; }
.dialog .tabs button { padding: 0 10px 0 8px; }
.dialog .tabs button + button { padding-left: 10px; padding-right: 17px; }
.dialog .tabs button + .down { padding: 0 8px 0 5px; margin-right: 7px; }
.dialog .tabs .down ~ button { padding-left: 11px; padding-right: 10px; }
.cmds { display: flex; gap: 4px; padding-top: 5px; margin-right: -1px; }
.cmds button { width: 73px; height: 23px; background: #e1e1e1; border: 1px solid #adadad; }
.cmds button + button { width: 71px; }
.dlgbody { flex: 1; min-height: 0; display: flex; gap: 4px; }
.browse { flex: 0 0 215px; min-width: 0; display: flex; flex-direction: column; }
.combo { position: relative; }
.combo select { appearance: none; display: block; width: 100%; height: 20px; padding: 0 16px 0 3px; font: inherit; color: #000; background: #e3e3e3; border: 1px solid #aaa; border-radius: 0; overflow: hidden; }
.combo svg { position: absolute; right: 4px; top: 7px; }
.pagetabs { display: flex; align-items: flex-end; height: 23px; }
.pagetabs button { height: 19px; padding: 0 3px; border: 1px solid #d9d9d9; border-width: 1px 1px 0 0; }
.pagetabs .on { height: 21px; padding: 0 7px; background: #fff; }
.page { flex: 1; min-height: 0; display: flex; flex-direction: column; padding: 3px 2px 2px 4px; margin: 0 1px 1px 0; background: #fff; border: solid #d9d9d9; border-width: 0 1px 1px 0; }
.chaps { flex: 1; padding: 1px 0 0 3px; overflow: hidden; }
.chaps li { display: flex; height: 16px; white-space: nowrap; }
.chaps i { position: relative; flex: none; width: 19px; }
.chaps .line::before { content: ""; position: absolute; left: 9px; top: 0; bottom: 0; border-left: 1px dotted #888; }
.chaps .half::before { bottom: 7px; }
.chaps .dash::after { content: ""; position: absolute; left: 10px; top: 8px; width: 8px; border-top: 1px dotted #888; }
.chaps .node { display: grid; place-items: center; }
.closed { color: #aaa; }
.chaps li > span { flex: 1; min-width: 0; padding-left: 1px; overflow: hidden; }
.chaps .on > span { background: #d9d9d9; }
.radios { flex: none; height: 37px; display: flex; background: #f0f0f0; padding-left: 11px; }
.radios label { width: 64px; display: flex; align-items: center; gap: 9px; }
.radios input { appearance: none; width: 11px; height: 11px; margin: 0; border: 1px solid #888; border-radius: 50%; background: #fff; }
.radios input:checked { background: radial-gradient(circle, #000 0 2px, #fff 3px); }
.resultbox { flex: 1; min-width: 0; background: #fff; border: solid #a7abb0; border-width: 1px 0 0 1px; padding-top: 1px; }

.ime { position: absolute; left: 888px; top: 7px; width: 196px; height: 23px; display: flex; align-items: center; gap: 6px; padding-left: 24px; background: #fff; border: 1px solid #a9c4de; color: #1b75c9; }
.ime span { font-size: 15px; font-weight: bold; }
.imelogo { position: absolute; left: -9px; top: -4px; width: 26px; height: 28px; }
.ball { position: absolute; left: 1155px; top: -26px; width: 46px; height: 46px; padding-top: 24px; border: 2px solid #e8f5e8; border-radius: 50%; background: #3fbf5a; color: #fff; font-weight: bold; text-align: center; line-height: 15px; box-shadow: 0 1px 3px rgba(0, 0, 0, .5); }
.mark { position: absolute; left: 128px; top: 340px; width: 340px; height: 112px; pointer-events: none; }
</style>
